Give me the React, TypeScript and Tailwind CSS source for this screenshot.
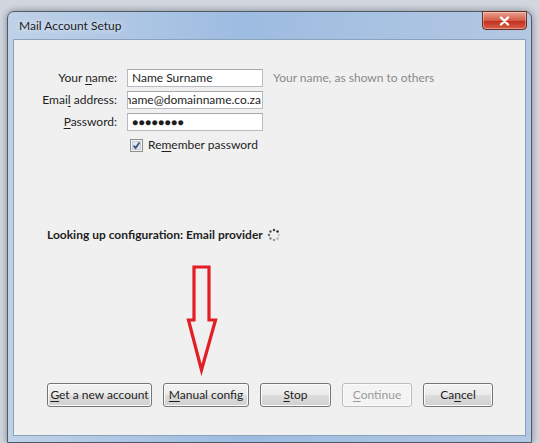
import type { ReactNode } from "react";

function Key({ children }: { children: ReactNode }) {
  return <span className="underline underline-offset-[2px]">{children}</span>;
}

function Field({ label, children, hint }: { label: ReactNode; children: ReactNode; hint?: string }) {
  return (
    <div className="flex h-[18px] items-center">
      <div className="w-[103px] text-right text-[#1e1e1e]">{label}</div>
      <div className="ml-[10px] flex h-[18px] w-[136px] items-center overflow-hidden border border-[#b6bac1] border-t-[#a4a8b0] bg-white pl-[4px] pr-[1px] text-[#1e1e1e]">
        {children}
      </div>
      {hint && <div className="ml-[10px] text-[#8a8a8a]">{hint}</div>}
    </div>
  );
}

function Button({ children, width, disabled }: { children: ReactNode; width: string; disabled?: boolean }) {
  return (
    <button
      type="button"
      disabled={disabled}
      className={
        disabled
          ? `${width} h-[24px] rounded-[3px] border border-[#b9bdc1] bg-[#f4f4f4] text-[#9a9a9a] shadow-[inset_0_0_0_1px_#fbfbfb]`
          : `${width} h-[24px] rounded-[3px] border border-[#767676] bg-[linear-gradient(#f3f3f3,#ebebeb_48%,#dddddd_52%,#d0d0d0)] text-[#1e1e1e] shadow-[inset_0_0_0_1px_#fcfcfc]`
      }
    >
      {children}
    </button>
  );
}

function Spinner() {
  const dots = [0, 1, 2, 3, 4, 5, 6, 7];
  return (
    <svg width="14" height="14" viewBox="0 0 14 14" className="ml-[4px]">
      {dots.map((i) => {
        const a = (i / 8) * Math.PI * 2;
        return (
          <circle
            key={i}
            cx={7 + Math.cos(a) * 5}
            cy={7 + Math.sin(a) * 5}
            r="1.25"
            fill="#2a2a2a"
            opacity={0.2 + (i / 7) * 0.8}
          />
        );
      })}
    </svg>
  );
}

export default function App() {
  return (
    <div className="h-[443px] w-[539px] overflow-hidden bg-[#d1d6df] pl-[7px] pt-[11px] font-['Lato',sans-serif] text-[12px]">
      <div className="relative flex h-[432px] w-[525px] flex-col rounded-t-[7px] border border-[#4d5a68] bg-[linear-gradient(90deg,#bfd1e7,#9dbce1_45%,#b3c8e2)] px-[5px] pb-[6px] shadow-[0_0_7px_rgba(0,0,0,0.4)]">
        <div className="flex h-[27px] items-center pl-[6px] text-[12px] text-[#1c1c1c] [text-shadow:0_0_6px_#ffffff]">
          Mail Account Setup
        </div>
        <button
          type="button"
          className="absolute right-[4px] top-[-1px] flex h-[19px] w-[45px] items-center justify-center rounded-b-[4px] border border-[#6b2d24] bg-[linear-gradient(#e8a393,#d45a45_50%,#c2311f_55%,#d8604a)] shadow-[inset_0_0_0_1px_rgba(255,255,255,0.35)]"
        >
          <svg width="11" height="10" viewBox="0 0 11 10">
            <path d="M2 1.5 L9 8.5 M9 1.5 L2 8.5" stroke="#ffffff" strokeWidth="2.4" strokeLinecap="round" />
          </svg>
        </button>

        <div className="relative flex flex-1 flex-col border border-[#8ba2bc] bg-[#f0f0f0] pt-[29px]">
          <div className="flex flex-col gap-[4px]">
            <Field
              label={
                <>
                  Your <Key>n</Key>ame:
                </>
              }
              hint="Your name, as shown to others"
            >
              Name Surname
            </Field>
            <Field
              label={
                <>
                  Emai<Key>l</Key> address:
                </>
              }
            >
              <div className="flex w-full justify-end whitespace-nowrap">name@domainname.co.za</div>
            </Field>
            <Field
              label={
                <>
                  <Key>P</Key>assword:
                </>
              }
            >
              <span className="text-[10px] font-bold tracking-[0.5px]">●●●●●●●●</span>
            </Field>
          </div>

          <div className="ml-[116px] mt-[5px] flex h-[18px] items-center text-[#1e1e1e]">
            <svg width="13" height="13" viewBox="0 0 13 13">
              <rect x="0.5" y="0.5" width="12" height="12" fill="#f4f4f4" stroke="#8e8f8f" />
              <rect x="2.5" y="2.5" width="8" height="8" fill="#e3e6ea" stroke="#c8ccd2" />
              <path d="M3.6 6.6 L5.6 9 L9.4 3.6" fill="none" stroke="#3b4f86" strokeWidth="1.7" />
            </svg>
            <span className="ml-[5px]">
              Re<Key>m</Key>ember password
            </span>
          </div>

          <div className="ml-[33px] mt-[73px] flex h-[16px] items-center font-bold text-[#1e1e1e]">
            Looking up configuration: Email provider
            <Spinner />
          </div>

          <svg
            width="40"
            height="116"
            viewBox="0 0 40 116"
            className="absolute left-[170px] top-[223px]"
          >
            <path
              d="M10 4 H25 V57 H31.5 L17.5 107 L4.5 57 H10 Z"
              fill="none"
              stroke="#e31e24"
              strokeWidth="3.2"
            />
          </svg>

          <div className="mb-[28px] ml-[33px] mt-auto flex gap-[11px]">
            <Button width="w-[105px]">
              <Key>G</Key>et a new account
            </Button>
            <Button width="w-[86px]">
              <Key>M</Key>anual config
            </Button>
            <Button width="w-[71px]">
              <Key>S</Key>top
            </Button>
            <Button width="w-[70px]" disabled>
              <Key>C</Key>ontinue
            </Button>
            <Button width="w-[70px]">
              Ca<Key>n</Key>cel
            </Button>
          </div>
        </div>
      </div>
    </div>
  );
}
